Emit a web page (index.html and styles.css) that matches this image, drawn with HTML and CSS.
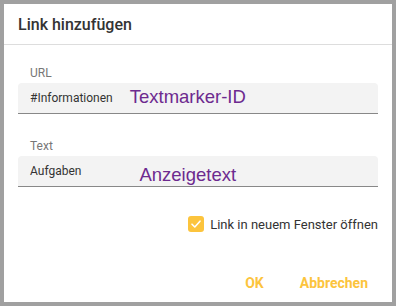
FILE: index.html
```html
<!DOCTYPE html>
<html lang="de">
  <head>
    <meta charset="UTF-8" />
    <meta name="viewport" content="width=device-width, initial-scale=1.0" />
    <title>Link hinzufügen</title>
    <link rel="stylesheet" href="styles.css">
  </head>
  <body>
    <div class="dialog">
      <div class="dialog-header">Link hinzufügen</div>

      <div class="dialog-body">
        <div class="field">
          <label class="field-label" for="url">URL</label>
          <div class="field-input">
            <span class="value" id="url">#Informationen</span>
            <span class="hint hint-url">Textmarker-ID</span>
          </div>
        </div>

        <div class="field">
          <label class="field-label" for="text">Text</label>
          <div class="field-input">
            <span class="value" id="text">Aufgaben</span>
            <span class="hint hint-text">Anzeigetext</span>
          </div>
        </div>

        <div class="check-row">
          <span class="checkbox">
            <svg width="12" height="12" viewBox="0 0 12 12">
              <path d="M2 6.2 L4.8 9 L10 3.2" fill="none" stroke="#ffffff" stroke-width="1.6" stroke-linecap="round" stroke-linejoin="round" />
            </svg>
          </span>
          <span class="check-label">Link in neuem Fenster öffnen</span>
        </div>
      </div>

      <div class="dialog-actions">
        <button class="btn">OK</button>
        <button class="btn">Abbrechen</button>
      </div>
    </div>
  </body>
</html>
```

FILE: styles.css
```css
body {
  margin: 0;
  padding: 4px;
  background-color: #a0a0a0;
  font-family: Roboto, "Noto Sans", sans-serif;
}

.dialog {
  width: 388px;
  height: 298px;
  background: #ffffff;
  display: flex;
  flex-direction: column;
}

.dialog-header {
  height: 41px;
  box-sizing: border-box;
  padding: 1px 0 0 14px;
  border-bottom: 1px solid #dddddd;
  font-size: 16px;
  font-weight: 500;
  color: #333333;
  display: flex;
  align-items: center;
}

.dialog-body {
  padding: 19px 14px 0;
}

.field {
  margin-bottom: 23px;
}

.field-label {
  display: block;
  padding-left: 12px;
  font-size: 12px;
  color: #777777;
  height: 19px;
  line-height: 19px;
}

.field-input {
  height: 30px;
  background: #f3f3f3;
  border-radius: 4px 4px 0 0;
  border-bottom: 1px solid #888888;
  display: flex;
  align-items: center;
  padding-left: 12px;
}

.value {
  font-size: 12px;
  color: #333333;
}

.hint {
  font-family: "Liberation Sans", Arial, sans-serif;
  font-size: 18.5px;
  color: #6d2a8f;
}

.hint-url {
  margin-left: 17px;
  margin-top: -3px;
}

.hint-text {
  margin-left: 58px;
  margin-top: 8px;
}

.check-row {
  display: flex;
  justify-content: flex-end;
  align-items: center;
  margin-top: 29px;
}

.checkbox {
  width: 16px;
  height: 16px;
  border-radius: 3px;
  background: #fcc43d;
  display: flex;
  align-items: center;
  justify-content: center;
  margin-right: 6px;
}

.check-label {
  font-size: 13px;
  color: #333333;
}

.dialog-actions {
  margin-top: auto;
  display: flex;
  justify-content: flex-end;
  gap: 20px;
  padding: 0 16px 7px 0;
}

.btn {
  background: none;
  border: none;
  padding: 4px 8px;
  font-family: Roboto, sans-serif;
  font-size: 14px;
  font-weight: 700;
  color: #fcc43d;
  cursor: pointer;
}
```
